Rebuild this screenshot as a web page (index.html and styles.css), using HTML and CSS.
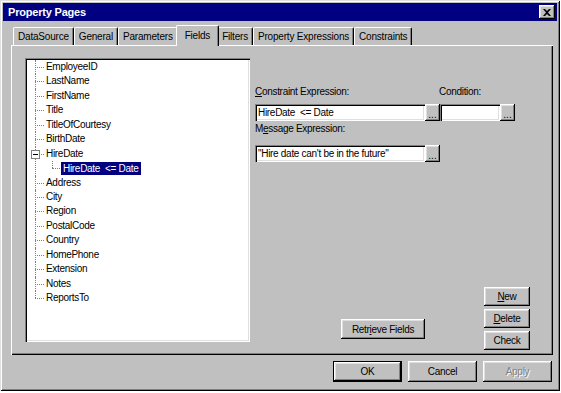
FILE: index.html
```html
<!DOCTYPE html>
<html lang="en">
<head>
  <meta charset="UTF-8">
  <link rel="stylesheet" href="styles.css">
  <title>Property Pages</title>
</head>
<body>

  <div class="window">
    <div class="titlebar">
      <span class="title">Property Pages</span>
      <button class="close-btn">
        <svg width="8" height="7" viewBox="0 0 8 7"><path d="M0 0h2l2 2 2-2h2L5 3.5 8 7H6L4 5 2 7H0l3-3.5z" fill="#000"/></svg>
      </button>
    </div>

    <div class="tabs">
      <div class="tab">DataSource</div>
      <div class="tab">General</div>
      <div class="tab">Parameters</div>
      <div class="tab active">Fields</div>
      <div class="tab">Filters</div>
      <div class="tab">Property Expressions</div>
      <div class="tab">Constraints</div>
    </div>

    <div class="panel">
      <div class="tree">
        <ul class="tree-root">
          <li class="node"><span class="row">EmployeeID</span></li>
          <li class="node"><span class="row">LastName</span></li>
          <li class="node"><span class="row">FirstName</span></li>
          <li class="node"><span class="row">Title</span></li>
          <li class="node"><span class="row">TitleOfCourtesy</span></li>
          <li class="node"><span class="row">BirthDate</span></li>
          <li class="node">
            <span class="toggle"></span>
            <span class="row">HireDate</span>
            <ul class="children">
              <li class="node last"><span class="row"><span class="selected">HireDate &nbsp;&lt;= Date</span></span></li>
            </ul>
          </li>
          <li class="node"><span class="row">Address</span></li>
          <li class="node"><span class="row">City</span></li>
          <li class="node"><span class="row">Region</span></li>
          <li class="node"><span class="row">PostalCode</span></li>
          <li class="node"><span class="row">Country</span></li>
          <li class="node"><span class="row">HomePhone</span></li>
          <li class="node"><span class="row">Extension</span></li>
          <li class="node"><span class="row">Notes</span></li>
          <li class="node last"><span class="row">ReportsTo</span></li>
        </ul>
      </div>

      <div class="side">
        <div class="label-row">
          <span class="label first"><u>C</u>onstraint Expression:</span>
          <span class="label">Condition:</span>
        </div>
        <div class="field-row">
          <div class="input wide">HireDate &nbsp;&lt;= Date</div>
          <button class="dots">...</button>
          <div class="input narrow"></div>
          <button class="dots">...</button>
        </div>

        <div class="label message-label">M<u>e</u>ssage Expression:</div>
        <div class="field-row message-row">
          <div class="input wide">"Hire date can't be in the future"</div>
          <button class="dots">...</button>
        </div>

        <div class="actions">
          <button class="btn retrieve">Retr<u>i</u>eve Fields</button>
          <div class="stack">
            <button class="btn"><u>N</u>ew</button>
            <button class="btn"><u>D</u>elete</button>
            <button class="btn">Check</button>
          </div>
        </div>
      </div>
    </div>

    <div class="footer">
      <button class="btn default">OK</button>
      <button class="btn">Cancel</button>
      <button class="btn" disabled>Apply</button>
    </div>
  </div>

</body>
</html>
```

FILE: styles.css
```css
body {
  margin: 0;
  background: #fff;
  font-family: "Liberation Sans", Arial, sans-serif;
  font-size: 10px;
  letter-spacing: -0.3px;
  color: #000;
}

.window {
  width: 560px;
  height: 391px;
  box-sizing: border-box;
  padding: 3px;
  background: #c0c0c0;
  display: flex;
  flex-direction: column;
  box-shadow: inset 1px 1px #dfdfdf, inset -1px -1px #000,
              inset 2px 2px #fff, inset -2px -2px #808080;
}

/* title bar */
.titlebar {
  height: 18px;
  background: #000080;
  color: #fff;
  display: flex;
  align-items: center;
  justify-content: space-between;
  padding: 0 2px 0 5px;
}

.title {
  font-weight: bold;
  font-size: 11px;
  letter-spacing: -0.2px;
}

.close-btn {
  width: 16px;
  height: 14px;
  padding: 0;
  border: 0;
  background: #c0c0c0;
  display: flex;
  align-items: center;
  justify-content: center;
  box-shadow: inset -1px -1px #000, inset 1px 1px #fff,
              inset -2px -2px #808080, inset 2px 2px #dfdfdf;
}

/* tabs */
.tabs {
  display: flex;
  align-items: flex-end;
  height: 20px;
  margin-top: 4px;
  padding-left: 10px;
}

.tab {
  height: 18px;
  box-sizing: border-box;
  padding: 0 4px;
  line-height: 18px;
  letter-spacing: -0.2px;
  white-space: nowrap;
  border-top: 1px solid #fff;
  border-left: 1px solid #fff;
  border-right: 1px solid #000;
  border-radius: 2px 2px 0 0;
  box-shadow: inset -1px 0 #808080;
}

.tab.active {
  position: relative;
  z-index: 1;
  height: 21px;
  margin: 0 -2px -1px;
  padding: 0 8px;
  line-height: 19px;
  background: #c0c0c0;
}

/* panel */
.panel {
  width: 542px;
  height: 310px;
  margin-left: 8px;
  box-sizing: border-box;
  padding: 13px 23px 5px 14px;
  display: flex;
  box-shadow: inset 1px 1px #fff, inset -1px -1px #000, inset -2px -2px #808080;
}

.tree {
  width: 225px;
  height: 284px;
  flex-shrink: 0;
  box-sizing: border-box;
  padding: 2px 0 0 10px;
  background: #fff;
  box-shadow: inset 1px 1px #808080, inset 2px 2px #000,
              inset -1px -1px #fff, inset -2px -2px #dfdfdf;
}

.tree ul {
  list-style: none;
  margin: 0;
  padding: 0;
}

.node {
  position: relative;
  padding-left: 11px;
}

.node::before {
  content: '';
  position: absolute;
  left: 0;
  top: 7px;
  width: 9px;
  border-top: 1px dotted #808080;
}

.node::after {
  content: '';
  position: absolute;
  left: 0;
  top: 0;
  bottom: 0;
  border-left: 1px dotted #808080;
}

.node.last::after {
  bottom: auto;
  height: 7px;
}

.row {
  display: block;
  height: 14.45px;
  line-height: 14.45px;
  white-space: nowrap;
}

.children {
  margin-left: 6px !important;
}

.children .node {
  padding-left: 9px;
}

.children .node::before {
  width: 8px;
}

.selected {
  display: inline-block;
  background: #000080;
  color: #fff;
  padding: 0 2px;
  line-height: 13px;
  vertical-align: middle;
}

.toggle {
  position: absolute;
  z-index: 1;
  left: -4px;
  top: 3px;
  width: 9px;
  height: 9px;
  box-sizing: border-box;
  background: #fff;
  border: 1px solid #808080;
}

.toggle::after {
  content: '';
  position: absolute;
  left: 1px;
  top: 3px;
  width: 5px;
  height: 1px;
  background: #000;
}

/* right side form */
.side {
  flex: 1;
  margin-left: 5px;
  display: flex;
  flex-direction: column;
}

.label-row {
  display: flex;
  margin-top: 27px;
  line-height: 13px;
}

.label.first {
  width: 184px;
}

.field-row {
  display: flex;
  margin-top: 6px;
  height: 17px;
}

.message-label {
  margin-top: 1px;
  line-height: 13px;
}

.message-row {
  margin-top: 10px;
}

.input {
  height: 17px;
  box-sizing: border-box;
  padding: 0 3px;
  line-height: 17px;
  white-space: nowrap;
  background: #fff;
  box-shadow: inset 1px 1px #808080, inset 2px 2px #000,
              inset -1px -1px #fff, inset -2px -2px #dfdfdf;
}

.input.wide {
  width: 170px;
}

.input.narrow {
  width: 60px;
}

.dots,
.btn {
  font: inherit;
  letter-spacing: inherit;
  color: #000;
  background: #c0c0c0;
  border: 0;
  padding: 0;
  box-shadow: inset -1px -1px #000, inset 1px 1px #fff,
              inset -2px -2px #808080, inset 2px 2px #dfdfdf;
}

.dots {
  width: 15px;
  height: 17px;
  line-height: 10px;
  padding-top: 4px;
  letter-spacing: 0;
}

.actions {
  margin-top: auto;
  display: flex;
  align-items: flex-end;
  justify-content: flex-end;
}

.retrieve {
  width: 84px;
  height: 20px;
  margin: 0 59px 11px 0;
}

.stack {
  display: flex;
  flex-direction: column;
  gap: 3px;
}

.stack .btn {
  width: 46px;
  height: 19px;
}

/* bottom buttons */
.footer {
  display: flex;
  justify-content: flex-end;
  gap: 6px;
  margin-top: 6px;
  padding-right: 5px;
}

.footer .btn {
  width: 69px;
  height: 21px;
}

.btn.default {
  box-shadow: inset 0 0 0 1px #000, inset -2px -2px #000, inset 2px 2px #fff,
              inset -3px -3px #808080, inset 3px 3px #dfdfdf;
}

.btn:disabled {
  color: #808080;
  text-shadow: 1px 1px #fff;
}
```
